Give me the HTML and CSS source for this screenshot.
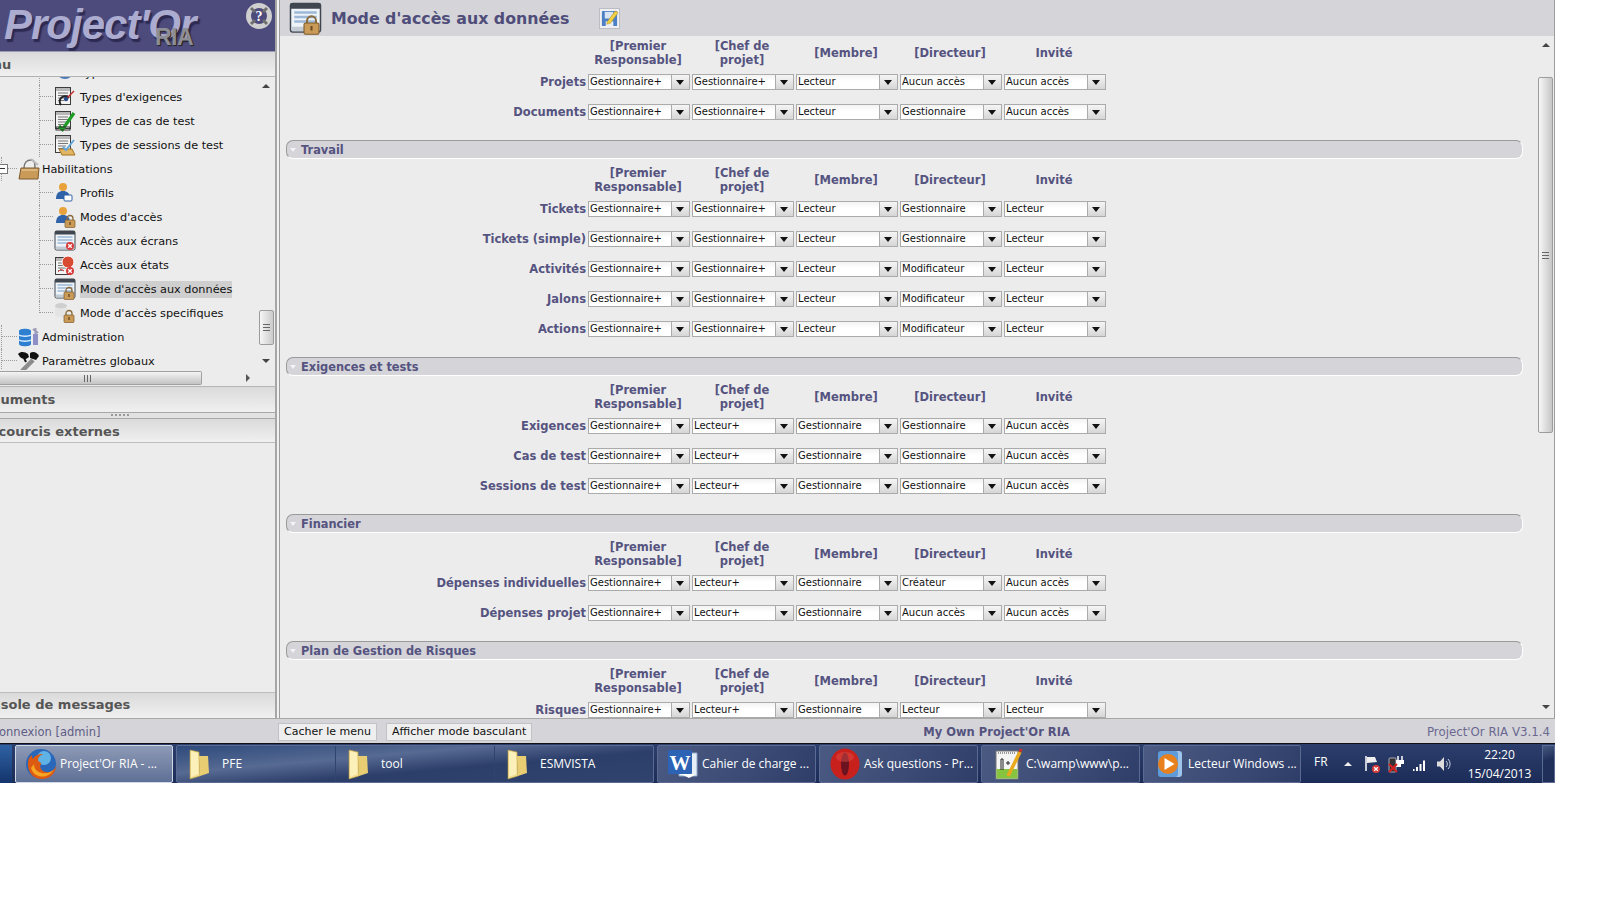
FILE: index.html
```html
<!DOCTYPE html>
<html lang="fr">
<head>
<meta charset="utf-8">
<title>Project'Or RIA</title>
<link rel="stylesheet" href="styles.css">
</head>
<body>
<svg class="defs" width="0" height="0" aria-hidden="true">
  <defs>
    <g id="sheet">
      <rect x="1.5" y="1.5" width="15" height="17" fill="#f3f3f3" stroke="#3c3c3c"/>
      <rect x="2" y="2" width="14" height="3" fill="#b8b8b8"/>
      <path d="M4 7h10M4 9.500h10M4 12h8M4 14.500h6" stroke="#777" stroke-width="1"/>
    </g>
    <g id="win">
      <rect x="1" y="1" width="20" height="19" rx="1.500" fill="#eef3f8" stroke="#3f4650"/>
      <rect x="1" y="1" width="20" height="3.500" fill="#3f4650"/>
      <path d="M3.500 7h15M3.500 10h15M3.500 13h15" stroke="#9db8d6" stroke-width="1.600"/>
      <rect x="2" y="16.500" width="18" height="3" fill="#c3cbd4"/>
    </g>
    <g id="lock">
      <path d="M3 5V3.500a3 3 0 0 1 6 0V5" fill="none" stroke="#8a6a3a" stroke-width="1.300"/>
      <rect x="1" y="5" width="10" height="7.500" rx="1" fill="#c99a58" stroke="#7d5b2b" stroke-width=".7"/>
      <rect x="5.300" y="7" width="1.400" height="3" fill="#6d4c22"/>
    </g>
    <g id="redx">
      <circle cx="4" cy="4" r="4" fill="#d83a3a"/>
      <path d="M2.200 2.200l3.600 3.600M5.800 2.200l-3.600 3.600" stroke="#fff" stroke-width="1.300"/>
    </g>
    <g id="person">
      <circle cx="9" cy="5" r="4" fill="#e8a23c"/>
      <path d="M2 17c0-6 3-8 7-8s7 2 7 8z" fill="#2f62a8"/>
    </g>
    <g id="ic-exig">
      <use href="#sheet"/>
      <path d="M7 19a5 5 0 0 1 8-7" fill="none" stroke="#222" stroke-width="2"/>
      <path d="M12 13l8-8" stroke="#c92828" stroke-width="1.500"/>
      <circle cx="12" cy="13" r="2.200" fill="#274b87"/>
    </g>
    <g id="ic-case">
      <use href="#sheet"/>
      <path d="M5 16l3.500 3.500L20 3" fill="none" stroke="#1f9c25" stroke-width="3.200"/>
      <rect x="2" y="17" width="14" height="3" fill="none" stroke="#333"/>
    </g>
    <g id="ic-sess">
      <use href="#sheet"/>
      <path d="M5 15h13l3 6H8z" fill="#e0b564" stroke="#a7711d"/>
      <path d="M9 13l3 3 8-10" fill="none" stroke="#61a6d8" stroke-width="2"/>
    </g>
    <g id="ic-hab">
      <path d="M6 10c0-5 3-8 7-8s4 4 4 9" fill="#eee" stroke="#777" stroke-width="1.500"/>
      <path d="M1 21l2-11h18l-1 11z" fill="#c99a58" stroke="#7d5b2b"/>
      <path d="M3.500 12h16" stroke="#ecd3a4"/>
      <path d="M13 1l7 6" stroke="#bbb" stroke-width="2"/>
    </g>
    <g id="ic-prof">
      <use href="#person"/>
      <rect x="10" y="13" width="8" height="6" rx="1" fill="#fff" stroke="#2f62a8"/>
    </g>
    <g id="ic-mode">
      <use href="#person"/>
      <use href="#lock" x="10" y="8" transform="translate(0 1)"/>
    </g>
    <g id="ic-ecran">
      <use href="#win"/>
      <use href="#redx" x="12" y="12"/>
    </g>
    <g id="ic-etat">
      <use href="#sheet" x="0" y="2"/>
      <circle cx="14" cy="8" r="6" fill="#d94a32" stroke="#fff"/>
      <path d="M4 18l3-3 3 2" fill="none" stroke="#d84a4a"/>
      <use href="#redx" x="12" y="13"/>
    </g>
    <g id="ic-data">
      <use href="#win"/>
      <use href="#lock" x="9" y="9"/>
    </g>
    <g id="ic-spec">
      <ellipse cx="7" cy="4" rx="6" ry="3" fill="#cfcfcf"/>
      <path d="M1 4v9c0 3 12 3 12 0V4c0 3-12 3-12 0z" fill="#e4e4e4"/>
      <use href="#lock" x="9" y="8"/>
    </g>
    <g id="ic-admin">
      <path d="M1 5c0-3 12-3 12 0v13c0 3-12 3-12 0z" fill="#2f7fd1"/>
      <path d="M1 9c2 1.500 10 1.500 12 0M1 14c2 1.500 10 1.500 12 0" stroke="#d6ecff" stroke-width="1.500" fill="none"/>
      <path d="M15 8h5v11h-5z" fill="#8f8fc7"/>
      <path d="M17.500 8V2M15 3l5 4" stroke="#9a9ab8" stroke-width="2"/>
    </g>
    <g id="ic-param">
      <path d="M0 4c3-3 7-2 10 0l1 3-3 2c-3 0-5-1-6-2z" fill="#111"/>
      <path d="M12 3c3-2 7-1 9 3l-3 4-6-2z" fill="#111"/>
      <path d="M4 21l11-11" stroke="#8c8c8c" stroke-width="4.500"/>
      <path d="M6 8l2 4" stroke="#111" stroke-width="2"/>
    </g>
    <g id="ic-globe">
      <circle cx="11" cy="8" r="9" fill="#4a78b8"/>
      <path d="M3 10c3 3 13 3 16 0" stroke="#b7c6dd" fill="none" stroke-width="2"/>
    </g>
    <g id="folder">
      <path d="M3 2l9 2 1 24-10 3z" fill="#f3de8e" stroke="#b99b45" stroke-width=".6"/>
      <path d="M12 8h9l1 17-9 3z" fill="#e8cd72"/>
      <path d="M4 3l7 2 .5 21-7.500 3z" fill="#fbf0b9"/>
    </g>
  </defs>
</svg>

<div class="screen">
  <div class="main">
    <aside class="left">
      <header class="logo">
        <span class="logo-text">Project'Or</span>
        <span class="logo-ria">RIA</span>
        <svg class="help" viewBox="0 0 28 28" aria-hidden="true">
          <circle cx="14" cy="14" r="10.500" fill="#4d4a7c" stroke="#cfcfcf" stroke-width="5"/>
          <path d="M6 6l4 4M22 6l-4 4M6 22l4-4M22 22l-4-4" stroke="#6f6f6f" stroke-width="3"/>
          <text x="14" y="19" class="help-q">?</text>
        </svg>
      </header>
      <div class="acc-head acc-menu">Menu</div>
      <div class="tree-box">
        <div class="tree-col">
          <div class="tree-view">
            <div class="tree-inner">
              <div class="row l3"><span class="conn"></span><svg class="ic" viewBox="0 0 22 22"><use href="#ic-globe"/></svg><span class="lbl">Types</span></div>
              <div class="row l3"><span class="conn"></span><svg class="ic" viewBox="0 0 22 22"><use href="#ic-exig"/></svg><span class="lbl">Types d'exigences</span></div>
              <div class="row l3"><span class="conn"></span><svg class="ic" viewBox="0 0 22 22"><use href="#ic-case"/></svg><span class="lbl">Types de cas de test</span></div>
              <div class="row l3"><span class="conn"></span><svg class="ic" viewBox="0 0 22 22"><use href="#ic-sess"/></svg><span class="lbl">Types de sessions de test</span></div>
              <div class="row l2"><span class="conn expand"><span class="box"></span></span><svg class="ic" viewBox="0 0 22 22"><use href="#ic-hab"/></svg><span class="lbl">Habilitations</span></div>
              <div class="row l3"><span class="conn"></span><svg class="ic" viewBox="0 0 22 22"><use href="#ic-prof"/></svg><span class="lbl">Profils</span></div>
              <div class="row l3"><span class="conn"></span><svg class="ic" viewBox="0 0 22 22"><use href="#ic-mode"/></svg><span class="lbl">Modes d'accès</span></div>
              <div class="row l3"><span class="conn"></span><svg class="ic" viewBox="0 0 22 22"><use href="#ic-ecran"/></svg><span class="lbl">Accès aux écrans</span></div>
              <div class="row l3"><span class="conn"></span><svg class="ic" viewBox="0 0 22 22"><use href="#ic-etat"/></svg><span class="lbl">Accès aux états</span></div>
              <div class="row l3"><span class="conn"></span><svg class="ic" viewBox="0 0 22 22"><use href="#ic-data"/></svg><span class="lbl sel-lbl">Mode d'accès aux données</span></div>
              <div class="row l3 last"><span class="conn"></span><svg class="ic" viewBox="0 0 22 22"><use href="#ic-spec"/></svg><span class="lbl">Mode d'accès specifiques</span></div>
              <div class="row l2"><span class="conn"></span><svg class="ic" viewBox="0 0 22 22"><use href="#ic-admin"/></svg><span class="lbl">Administration</span></div>
              <div class="row l2"><span class="conn"></span><svg class="ic" viewBox="0 0 22 22"><use href="#ic-param"/></svg><span class="lbl">Paramètres globaux</span></div>
            </div>
          </div>
          <div class="hbar">
            <div class="hthumb"><span class="grip-v"></span></div>
            <span class="tri-r"></span>
          </div>
        </div>
        <div class="vbar">
          <span class="tri-u"></span>
          <div class="vthumb"><span class="grip-h"></span></div>
          <span class="tri-d"></span>
        </div>
      </div>
      <div class="acc-head acc-doc">Documents</div>
      <div class="split"><span class="split-dots"></span></div>
      <div class="acc-head acc-link">Raccourcis externes</div>
      <div class="left-fill"></div>
      <div class="acc-head acc-cons">Console de messages</div>
    </aside>
    <div class="gutter"></div>
    <main class="right">
      <div class="titlebar">
        <svg class="title-ic" viewBox="0 0 22 22"><use href="#ic-data"/></svg>
        <h1 class="title">Mode d'accès aux données</h1>
        <button class="save" type="button" aria-label="Enregistrer">
          <svg viewBox="0 0 20 20" class="save-ic">
            <rect x="2" y="2" width="16" height="16" rx="1" fill="#4d7fc4"/>
            <rect x="6" y="13" width="8" height="5" fill="#e9edf4"/>
            <rect x="5" y="3" width="9" height="7" fill="#d8e3f3"/>
            <path d="M8 13l8-11 3 2-8 11-4 1z" fill="#f1cf45" stroke="#a98a1d" stroke-width=".5"/>
          </svg>
        </button>
      </div>
      <div class="body">
        <div class="content">
          <div class="grid head"><span></span><span>[Premier Responsable]</span><span>[Chef de projet]</span><span>[Membre]</span><span>[Directeur]</span><span>Invité</span></div>
          <div class="grid line"><label>Projets</label>
            <div class="sel"><span class="val">Gestionnaire+</span><span class="arr"></span></div>
            <div class="sel"><span class="val">Gestionnaire+</span><span class="arr"></span></div>
            <div class="sel"><span class="val">Lecteur</span><span class="arr"></span></div>
            <div class="sel"><span class="val">Aucun accès</span><span class="arr"></span></div>
            <div class="sel"><span class="val">Aucun accès</span><span class="arr"></span></div>
          </div>
          <div class="grid line"><label>Documents</label>
            <div class="sel"><span class="val">Gestionnaire+</span><span class="arr"></span></div>
            <div class="sel"><span class="val">Gestionnaire+</span><span class="arr"></span></div>
            <div class="sel"><span class="val">Lecteur</span><span class="arr"></span></div>
            <div class="sel"><span class="val">Gestionnaire</span><span class="arr"></span></div>
            <div class="sel"><span class="val">Aucun accès</span><span class="arr"></span></div>
          </div>

          <div class="section"><span class="sec-arrow"></span>Travail</div>
          <div class="grid head"><span></span><span>[Premier Responsable]</span><span>[Chef de projet]</span><span>[Membre]</span><span>[Directeur]</span><span>Invité</span></div>
          <div class="grid line"><label>Tickets</label>
            <div class="sel"><span class="val">Gestionnaire+</span><span class="arr"></span></div>
            <div class="sel"><span class="val">Gestionnaire+</span><span class="arr"></span></div>
            <div class="sel"><span class="val">Lecteur</span><span class="arr"></span></div>
            <div class="sel"><span class="val">Gestionnaire</span><span class="arr"></span></div>
            <div class="sel"><span class="val">Lecteur</span><span class="arr"></span></div>
          </div>
          <div class="grid line"><label>Tickets (simple)</label>
            <div class="sel"><span class="val">Gestionnaire+</span><span class="arr"></span></div>
            <div class="sel"><span class="val">Gestionnaire+</span><span class="arr"></span></div>
            <div class="sel"><span class="val">Lecteur</span><span class="arr"></span></div>
            <div class="sel"><span class="val">Gestionnaire</span><span class="arr"></span></div>
            <div class="sel"><span class="val">Lecteur</span><span class="arr"></span></div>
          </div>
          <div class="grid line"><label>Activités</label>
            <div class="sel"><span class="val">Gestionnaire+</span><span class="arr"></span></div>
            <div class="sel"><span class="val">Gestionnaire+</span><span class="arr"></span></div>
            <div class="sel"><span class="val">Lecteur</span><span class="arr"></span></div>
            <div class="sel"><span class="val">Modificateur</span><span class="arr"></span></div>
            <div class="sel"><span class="val">Lecteur</span><span class="arr"></span></div>
          </div>
          <div class="grid line"><label>Jalons</label>
            <div class="sel"><span class="val">Gestionnaire+</span><span class="arr"></span></div>
            <div class="sel"><span class="val">Gestionnaire+</span><span class="arr"></span></div>
            <div class="sel"><span class="val">Lecteur</span><span class="arr"></span></div>
            <div class="sel"><span class="val">Modificateur</span><span class="arr"></span></div>
            <div class="sel"><span class="val">Lecteur</span><span class="arr"></span></div>
          </div>
          <div class="grid line"><label>Actions</label>
            <div class="sel"><span class="val">Gestionnaire+</span><span class="arr"></span></div>
            <div class="sel"><span class="val">Gestionnaire+</span><span class="arr"></span></div>
            <div class="sel"><span class="val">Lecteur</span><span class="arr"></span></div>
            <div class="sel"><span class="val">Modificateur</span><span class="arr"></span></div>
            <div class="sel"><span class="val">Lecteur</span><span class="arr"></span></div>
          </div>

          <div class="section"><span class="sec-arrow"></span>Exigences et tests</div>
          <div class="grid head"><span></span><span>[Premier Responsable]</span><span>[Chef de projet]</span><span>[Membre]</span><span>[Directeur]</span><span>Invité</span></div>
          <div class="grid line"><label>Exigences</label>
            <div class="sel"><span class="val">Gestionnaire+</span><span class="arr"></span></div>
            <div class="sel"><span class="val">Lecteur+</span><span class="arr"></span></div>
            <div class="sel"><span class="val">Gestionnaire</span><span class="arr"></span></div>
            <div class="sel"><span class="val">Gestionnaire</span><span class="arr"></span></div>
            <div class="sel"><span class="val">Aucun accès</span><span class="arr"></span></div>
          </div>
          <div class="grid line"><label>Cas de test</label>
            <div class="sel"><span class="val">Gestionnaire+</span><span class="arr"></span></div>
            <div class="sel"><span class="val">Lecteur+</span><span class="arr"></span></div>
            <div class="sel"><span class="val">Gestionnaire</span><span class="arr"></span></div>
            <div class="sel"><span class="val">Gestionnaire</span><span class="arr"></span></div>
            <div class="sel"><span class="val">Aucun accès</span><span class="arr"></span></div>
          </div>
          <div class="grid line"><label>Sessions de test</label>
            <div class="sel"><span class="val">Gestionnaire+</span><span class="arr"></span></div>
            <div class="sel"><span class="val">Lecteur+</span><span class="arr"></span></div>
            <div class="sel"><span class="val">Gestionnaire</span><span class="arr"></span></div>
            <div class="sel"><span class="val">Gestionnaire</span><span class="arr"></span></div>
            <div class="sel"><span class="val">Aucun accès</span><span class="arr"></span></div>
          </div>

          <div class="section"><span class="sec-arrow"></span>Financier</div>
          <div class="grid head"><span></span><span>[Premier Responsable]</span><span>[Chef de projet]</span><span>[Membre]</span><span>[Directeur]</span><span>Invité</span></div>
          <div class="grid line"><label>Dépenses individuelles</label>
            <div class="sel"><span class="val">Gestionnaire+</span><span class="arr"></span></div>
            <div class="sel"><span class="val">Lecteur+</span><span class="arr"></span></div>
            <div class="sel"><span class="val">Gestionnaire</span><span class="arr"></span></div>
            <div class="sel"><span class="val">Créateur</span><span class="arr"></span></div>
            <div class="sel"><span class="val">Aucun accès</span><span class="arr"></span></div>
          </div>
          <div class="grid line"><label>Dépenses projet</label>
            <div class="sel"><span class="val">Gestionnaire+</span><span class="arr"></span></div>
            <div class="sel"><span class="val">Lecteur+</span><span class="arr"></span></div>
            <div class="sel"><span class="val">Gestionnaire</span><span class="arr"></span></div>
            <div class="sel"><span class="val">Aucun accès</span><span class="arr"></span></div>
            <div class="sel"><span class="val">Aucun accès</span><span class="arr"></span></div>
          </div>

          <div class="section"><span class="sec-arrow"></span>Plan de Gestion de Risques</div>
          <div class="grid head"><span></span><span>[Premier Responsable]</span><span>[Chef de projet]</span><span>[Membre]</span><span>[Directeur]</span><span>Invité</span></div>
          <div class="grid line"><label>Risques</label>
            <div class="sel"><span class="val">Gestionnaire+</span><span class="arr"></span></div>
            <div class="sel"><span class="val">Lecteur+</span><span class="arr"></span></div>
            <div class="sel"><span class="val">Gestionnaire</span><span class="arr"></span></div>
            <div class="sel"><span class="val">Lecteur</span><span class="arr"></span></div>
            <div class="sel"><span class="val">Lecteur</span><span class="arr"></span></div>
          </div>
        </div>
        <div class="pagebar">
          <span class="tri-u"></span>
          <div class="pagethumb"><span class="grip-h"></span></div>
          <span class="tri-d"></span>
        </div>
      </div>
    </main>
  </div>

  <footer class="status">
    <div class="st-left"><span>Connexion [admin]</span></div>
    <button class="st-btn" type="button">Cacher le menu</button>
    <button class="st-btn" type="button">Afficher mode basculant</button>
    <div class="st-center">My Own Project'Or RIA</div>
    <div class="st-right">Project'Or RIA V3.1.4</div>
  </footer>

  <nav class="taskbar">
    <div class="start"></div>
    <div class="task active">
      <svg class="t-ic" viewBox="0 0 32 32">
        <circle cx="16" cy="16" r="15" fill="#2a67b8"/>
        <circle cx="19" cy="10" r="7" fill="#5fb2e6"/>
        <path d="M4 10c-3 8 0 21 13 21 9 0 14-7 14-13-2 5-6 7-10 6-5-1-7-5-5-8 1-2-3-2-3-4 0-3 3-5 5-6-5 0-9 2-10 5-1-1-1-3-1-4-1 1-2 2-3 3z" fill="#dd5a12"/>
        <path d="M6 20c2 7 9 10 15 8 3-1 6-3 8-7-3 4-8 5-12 4-5-1-8-4-8-9z" fill="#f5a623"/>
      </svg>
      <span>Project'Or RIA - ...</span>
    </div>
    <div class="group">
      <div class="seg"><svg class="f-ic" viewBox="0 0 24 32"><use href="#folder"/></svg><span>PFE</span></div>
      <div class="seg"><svg class="f-ic" viewBox="0 0 24 32"><use href="#folder"/></svg><span>tool</span></div>
      <div class="seg"><svg class="f-ic" viewBox="0 0 24 32"><use href="#folder"/></svg><span>ESMVISTA</span></div>
    </div>
    <div class="task wide">
      <svg class="t-ic" viewBox="0 0 32 32">
        <path d="M12 5h18v23H12z" fill="#e6eef8" stroke="#8fa9cc"/>
        <path d="M16 22l12 5-6 3-8-4z" fill="#fff"/>
        <rect x="1" y="2" width="24" height="24" rx="1" fill="#2c63b5"/>
        <text x="13" y="22" class="word-w">W</text>
      </svg>
      <span>Cahier de charge ...</span>
    </div>
    <div class="task wide">
      <svg class="t-ic" viewBox="0 0 32 32">
        <ellipse cx="16" cy="16" rx="14.500" ry="15.500" fill="#c8201c"/>
        <ellipse cx="16" cy="16" rx="4" ry="11.500" fill="#6b1320"/>
        <ellipse cx="16" cy="9" rx="9" ry="5" fill="#e0524a" opacity=".45"/>
      </svg>
      <span>Ask questions - Pr...</span>
    </div>
    <div class="task wide">
      <svg class="t-ic" viewBox="0 0 32 32">
        <rect x="5" y="3" width="22" height="28" fill="#f4f4f4" stroke="#777"/>
        <rect x="5.500" y="21" width="21" height="9.500" fill="#86c440"/>
        <path d="M7 5h18" stroke="#999" stroke-dasharray="1 1" stroke-width="2"/>
        <path d="M10 22V11h2v11M15 15h4M17 13v4" fill="none" stroke="#222" stroke-width="1"/>
        <path d="M17 28L29 4" stroke="#e9a91c" stroke-width="3.500"/>
        <path d="M29 4l1-3" stroke="#c8342a" stroke-width="3"/>
      </svg>
      <span>C:\wamp\www\p...</span>
    </div>
    <div class="task">
      <svg class="t-ic" viewBox="0 0 32 32">
        <rect x="9" y="3" width="20" height="26" rx="3" fill="#9fc4ea"/>
        <rect x="5" y="3" width="20" height="26" rx="3" fill="#5e9bd8"/>
        <circle cx="15" cy="16" r="10" fill="#e8801e"/>
        <path d="M11.500 10l10 6-10 6z" fill="#fff"/>
      </svg>
      <span>Lecteur Windows ...</span>
    </div>
    <div class="tray">
      <span class="tr-lang">FR</span>
      <span class="tr-up"></span>
      <svg class="tr-ic" viewBox="0 0 18 18"><path d="M3 1v15" stroke="#fff" stroke-width="1.500"/><path d="M4 2h8l2 5-10 1z" fill="#eee"/><use href="#redx" x="9" y="10"/></svg>
      <svg class="tr-ic" viewBox="0 0 18 18"><path d="M11 1v4M15 1v4" stroke="#fff" stroke-width="1.500"/><path d="M9 5h8v4h-3v3H9z" fill="#fff"/><rect x="2" y="3" width="7" height="14" rx="1" fill="#333" stroke="#ddd" stroke-width=".7"/><path d="M2 9l8 8M10 9l-8 8" stroke="#d82020" stroke-width="2"/></svg>
      <svg class="tr-ic" viewBox="0 0 18 18"><path d="M2 14h1.500v2H2zM5 12h2v4H5zM8.500 9h2v7h-2zM12 5.500h2V16h-2z" fill="#fff"/></svg>
      <svg class="tr-ic tr-last" viewBox="0 0 18 18"><path d="M2 6.500h3L9 2v14l-4-4.500H2z" fill="#ddd"/><path d="M11 6a4 4 0 0 1 0 6M13 4a7 7 0 0 1 0 10" fill="none" stroke="#c8d0e0"/></svg>
      <div class="clock"><span>22:20</span><span>15/04/2013</span></div>
      <div class="show-desk"></div>
    </div>
  </nav>
</div>
</body>
</html>
```

FILE: styles.css
```css
* { box-sizing: border-box; }
html, body { margin: 0; padding: 0; background: #fff; }
body { font-family: "DejaVu Sans", Verdana, sans-serif; }
.defs { position: absolute; }

.screen { width: 1555px; height: 783px; display: flex; flex-direction: column; overflow: hidden; }
.main { height: 718px; flex: none; display: flex; background: #ececec; }

/* left column */
.left { width: 277px; flex: none; display: flex; flex-direction: column; border-right: 2px solid #a6a6a6; overflow: hidden; }
.gutter { width: 2px; flex: none; background: #f2f2f2; }
.logo { height: 52px; flex: none; background: #4d4a7c; border-bottom: 1px solid #9a9ab0; position: relative; overflow: hidden; }
.logo-text { display: block; padding: 5px 0 0 4px; font: italic bold 42px/40px "Liberation Sans", Arial, sans-serif; color: #acacd0; text-shadow: 2px 3px 1px #2c2a52; letter-spacing: -1px; }
.logo-ria { position: absolute; left: 155px; top: 26px; font: bold 23px/23px "Liberation Sans", Arial, sans-serif; color: #8d8d96; text-shadow: 1px 1px 1px #222; letter-spacing: -.5px; }
.help { position: absolute; left: 245px; top: 2px; width: 28px; height: 28px; }
.help-q { font: bold 14px "Liberation Serif", serif; fill: #fff; text-anchor: middle; }

.acc-head { flex: none; font-weight: bold; font-size: 13px; color: #555; background: linear-gradient(#dadada, #f0f0f0); overflow: hidden; white-space: nowrap; display: flex; align-items: center; }
.acc-menu { height: 25px; border-bottom: 1px solid #b2b2b2; text-indent: -29px; }
.acc-doc { height: 27px; border-top: 1px solid #b5b5b5; border-bottom: 1px solid #a8a8a8; text-indent: -27px; }
.acc-link { height: 25px; border-top: 1px solid #a8a8a8; border-bottom: 1px solid #bdbdbd; text-indent: -28px; padding-top: 2px; }
.acc-cons { height: 26px; border-top: 1px solid #bdbdbd; text-indent: -27px; padding-bottom: 2px; }

.tree-box { height: 309px; flex: none; display: flex; background: #ececec; }
.tree-col { flex: 1; display: flex; flex-direction: column; min-width: 0; }
.tree-view { height: 293px; flex: none; overflow: hidden; }
.tree-inner { margin-top: -16px; }
.row { height: 24px; display: flex; align-items: center; font-size: 11.250px; color: #111; white-space: nowrap; }
.conn { height: 24px; flex: none; border-left: 1px dotted #9a9a9a; background: linear-gradient(90deg, #9a9a9a 50%, transparent 50%) 0 11px / 2px 1px repeat-x; position: relative; }
.l3 { padding-left: 39px; }
.l3 .conn { width: 15px; }
.l3 .ic { margin-right: 4px; }
.l3.last .conn { height: 12px; align-self: flex-start; background-position: 0 11px; }
.l2 { padding-left: 0; }
.l2 .conn { width: 17px; margin-left: 1px; }
.l2 .ic { margin-right: 2px; }
.expand .box { position: absolute; left: -6px; top: 7px; width: 12px; height: 10px; border: 1px solid #777; background: linear-gradient(90deg, transparent 1px, #333 1px, #333 8px, transparent 8px) 0 3px / 100% 1px no-repeat #fff; }
.ic { width: 22px; height: 22px; flex: none; }
.lbl { padding: 1px 0; line-height: 15px; }
.sel-lbl { background: #cfcfcf; }

.hbar { height: 16px; flex: none; display: flex; align-items: center; }
.hthumb { width: 202px; height: 14px; border: 1px solid #a0a0a0; border-left: 0; border-radius: 0 2px 2px 0; background: linear-gradient(#f4f4f4, #c4c4c4); display: flex; align-items: center; justify-content: flex-end; padding-right: 110px; }
.grip-v { width: 7px; height: 7px; background: repeating-linear-gradient(90deg, #666 0 1px, transparent 1px 3px); }
.tri-r { margin-left: 44px; border-left: 4px solid #555; border-top: 4px solid transparent; border-bottom: 4px solid transparent; }

.vbar { width: 18px; flex: none; display: flex; flex-direction: column; align-items: center; padding-top: 7px; }
.tri-u { border-bottom: 4px solid #444; border-left: 4px solid transparent; border-right: 4px solid transparent; flex: none; }
.tri-d { border-top: 4px solid #444; border-left: 4px solid transparent; border-right: 4px solid transparent; flex: none; }
.vthumb { width: 15px; height: 35px; margin: 222px 0 14px; border: 1px solid #9c9c9c; border-radius: 2px; background: linear-gradient(90deg, #f6f6f6, #cbcbcb); display: flex; align-items: center; justify-content: center; }
.grip-h { width: 7px; height: 7px; background: repeating-linear-gradient(#666 0 1px, transparent 1px 3px); }

.split { height: 5px; flex: none; display: flex; justify-content: center; background: #e2e2e2; }
.split-dots { width: 20px; height: 2px; margin: 1px 34px 0 0; background: repeating-linear-gradient(90deg, #999 0 2px, transparent 2px 4px); }
.left-fill { flex: 1; background: #ececec; }

/* right column */
.right { width: 1276px; flex: none; display: flex; flex-direction: column; border-left: 1px solid #9c9c9c; border-right: 1px solid #9c9c9c; }
.titlebar { height: 36px; flex: none; display: flex; align-items: center; background: #d4d4d9; padding-left: 9px; }
.title-ic { width: 33px; height: 33px; flex: none; }
.title { margin: 1px 0 0 9px; width: 268px; flex: none; font-size: 15.800px; font-weight: bold; color: #4f4d7a; white-space: nowrap; }
.save { width: 21px; height: 21px; padding: 0; border: 1px solid #bcbcc4; background: #f0f0f2; display: flex; }
.save-ic { width: 19px; height: 19px; }

.body { flex: 1; display: flex; min-height: 0; }
.content { flex: 1; min-width: 0; overflow: hidden; padding: 3px 0 0 0; }
.grid { display: grid; grid-template-columns: 308px repeat(5, 104px); }
.head { height: 28px; align-items: center; text-align: center; font-size: 11.500px; line-height: 14px; font-weight: bold; color: #55537f; padding-bottom: 2px; }
.head > span { padding: 0 8px 0 4px; }
.line { height: 30px; align-items: center; }
.line label { text-align: right; padding-right: 2px; font-size: 11.500px; font-weight: bold; color: #55537f; white-space: nowrap; }
.sel { width: 102px; height: 16px; display: flex; font-size: 10px; color: #111; }
.val { flex: 1; min-width: 0; border: 1px solid #ababab; border-right: 0; padding-left: 1px; line-height: 14px; background: linear-gradient(#f3f3f3, #fff 45%); white-space: nowrap; overflow: hidden; }
.arr { width: 19px; flex: none; border: 1px solid #ababab; padding-right: 2px; background: linear-gradient(#f5f5f5, #d6d6d6); display: flex; align-items: center; justify-content: center; }
.arr::before { content: ""; border-top: 5px solid #111; border-left: 4px solid transparent; border-right: 4px solid transparent; }
.section { margin: 13px 15px 0 6px; height: 19px; display: flex; align-items: center; background: #d4d4d9; border-top: 1px solid #9a9a9a; border-left: 1px solid #9a9a9a; border-bottom: 1px solid #fff; border-right: 1px solid #fff; border-radius: 7px; font-size: 11.400px; font-weight: bold; color: #55537f; padding-left: 3px; }
.section + .head { margin-top: 7px; }
.sec-arrow { width: 0; margin-right: 5px; border-top: 4px solid #f4f4f4; border-left: 3.500px solid transparent; border-right: 3.500px solid transparent; }

.pagebar { width: 16px; flex: none; display: flex; flex-direction: column; align-items: flex-start; padding-top: 7px; }
.pagebar .tri-u, .pagebar .tri-d { margin-left: 4px; }
.pagethumb { width: 15px; height: 356px; margin: 30px 0 272px; border: 1px solid #9c9c9c; border-radius: 2px; background: linear-gradient(90deg, #f6f6f6, #c6c6c6); display: flex; align-items: center; justify-content: center; }

/* status bar */
.status { height: 25px; flex: none; display: flex; align-items: center; padding-top: 1px; background: #d4d4d9; border-top: 1px solid #a8a8a8; font-size: 11.500px; }
.st-left { width: 278px; flex: none; overflow: hidden; white-space: nowrap; color: #5f5d85; }
.st-left span { display: block; margin-left: -9px; }
.st-btn { height: 18px; padding: 0 5px; margin-right: 9px; border: 1px solid #c2c2c6; background: #eeeeee; font: 11px "DejaVu Sans", Verdana, sans-serif; color: #111; white-space: nowrap; }
.st-center { flex: 1; text-align: center; font-weight: bold; padding-left: 25px; color: #55537f; white-space: nowrap; }
.st-right { flex: none; padding-right: 5px; font-size: 11.800px; color: #6a6890; white-space: nowrap; }

/* taskbar */
.taskbar { height: 40px; flex: none; display: flex; gap: 3px; align-items: center; background: linear-gradient(#2c3e6c, #1c2c58); border-top: 1px solid #111; font-family: "Open Sans", sans-serif; font-size: 12px; color: #fff; white-space: nowrap; }
.start { width: 12px; height: 38px; flex: none; background: linear-gradient(#2f62a4, #14346c); }
.task { width: 158px; height: 38px; flex: none; display: flex; align-items: center; padding-left: 9px; gap: 3px; border: 1px solid #5a6a90; border-radius: 2px; background: linear-gradient(120deg, #4a5a82 0%, #3a4a74 60%, #2e3e68 100%); }
.task.wide { width: 159px; }
.task.active { background: linear-gradient(#8d9ab6, #5f7096); border-color: #d0d8e6; }
.t-ic { width: 32px; height: 32px; flex: none; }
.word-w { font: bold 21px "Liberation Serif", serif; fill: #fff; text-anchor: middle; }
.group { width: 478px; height: 38px; flex: none; display: flex; border: 1px solid #5a6a90; border-radius: 2px; background: linear-gradient(175deg, #2e4a7c 0%, #566a92 35%, #2c3e6a 60%, #30426e 100%); }
.seg { flex: 1; display: flex; align-items: center; padding-left: 10px; gap: 11px; border-right: 1px solid #31446e; }
.seg:last-child { border-right: 0; }
.f-ic { width: 24px; height: 32px; flex: none; }
.tray { flex: 1; min-width: 0; display: flex; align-items: center; height: 38px; }
.tr-lang { margin: -4px 0 0 10px; width: 30px; flex: none; }
.tr-up { flex: none; border-bottom: 4px solid #eee; border-left: 4px solid transparent; border-right: 4px solid transparent; margin-right: 11px; }
.tr-ic { width: 18px; height: 18px; flex: none; margin-right: 6px; }
.tr-ic.tr-last { margin-right: 4px; }
.clock { width: 85px; flex: none; display: flex; flex-direction: column; align-items: center; line-height: 19px; font-size: 12px; }
.show-desk { width: 13px; height: 38px; flex: none; border: 1px solid #5a6a90; background: linear-gradient(160deg, #46587f, #1f2f5a 40%); }
```
